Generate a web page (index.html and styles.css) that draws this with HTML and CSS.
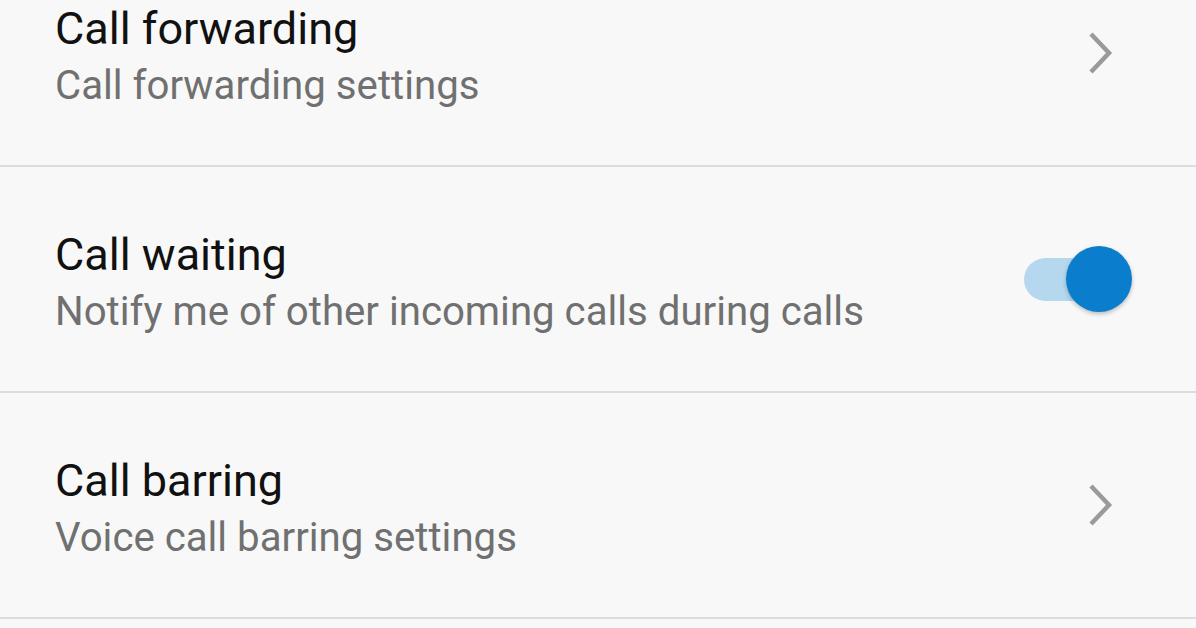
FILE: index.html
```html
<!DOCTYPE html>
<html>
<head>
<meta charset="utf-8">
<link rel="stylesheet" href="styles.css">
</head>
<body>
<div class="list">
  <div class="row">
    <div class="text">
      <div class="title">Call forwarding</div>
      <div class="subtitle">Call forwarding settings</div>
    </div>
    <svg class="chevron" width="30" height="46" viewBox="0 0 30 46"><path d="M5 4 L23 23 L5 42" fill="none" stroke="#9a9a9a" stroke-width="4.5"/></svg>
  </div>
  <div class="row">
    <div class="text">
      <div class="title">Call waiting</div>
      <div class="subtitle">Notify me of other incoming calls during calls</div>
    </div>
    <div class="toggle"><div class="track"></div><div class="thumb"></div></div>
  </div>
  <div class="row">
    <div class="text">
      <div class="title">Call barring</div>
      <div class="subtitle">Voice call barring settings</div>
    </div>
    <svg class="chevron" width="30" height="46" viewBox="0 0 30 46"><path d="M5 4 L23 23 L5 42" fill="none" stroke="#9a9a9a" stroke-width="4.5"/></svg>
  </div>
</div>
</body>
</html>
```

FILE: styles.css
```css
html, body {
  margin: 0;
  padding: 0;
  background: #f8f8f8;
  overflow: hidden;
}
body {
  font-family: Roboto, "Noto Sans", sans-serif;
}
.list {
  margin-top: -59px;
}
.row {
  height: 224px;
  border-bottom: 2px solid #dcdcdc;
  display: flex;
  align-items: flex-start;
  justify-content: space-between;
  padding: 0 64px 0 55px;
}
.text {
  padding-top: 60px;
}
.title {
  font-size: 45px;
  line-height: 56px;
  color: #111;
}
.subtitle {
  font-size: 40.2px;
  line-height: 58px;
  color: #707070;
}
.chevron {
  align-self: center;
  margin-right: 16px;
}
.toggle {
  align-self: center;
  position: relative;
  width: 108px;
  height: 66px;
}
.track {
  position: absolute;
  left: 0;
  top: 12px;
  width: 100px;
  height: 43px;
  border-radius: 22px;
  background: #b5d8ef;
}
.thumb {
  position: absolute;
  right: 0;
  top: 0;
  width: 66px;
  height: 66px;
  border-radius: 50%;
  background: #0a7dcc;
  box-shadow: 0 2px 4px rgba(0,0,0,0.25);
}
```
